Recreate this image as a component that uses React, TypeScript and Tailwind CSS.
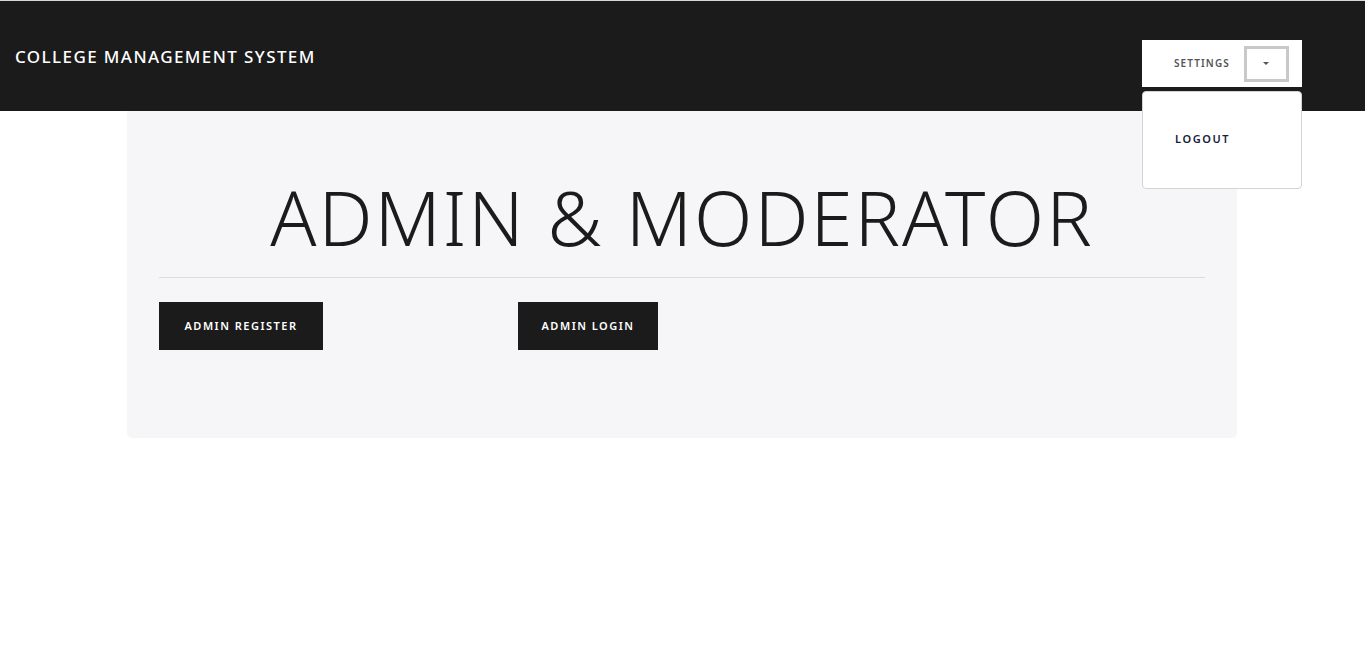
export default function App() {
  return (
    <div className="min-h-screen bg-white" style={{ fontFamily: '"Noto Sans", "Open Sans", sans-serif' }}>
      <header className="h-[111px] bg-[#1b1b1b] border-t border-[#d8d8d8] flex items-start justify-between px-[15px]">
        <div className="mt-[43px] text-white text-[17px] font-medium tracking-[1.4px]">COLLEGE MANAGEMENT SYSTEM</div>
        <div className="relative mt-[39px] mr-[48px]">
          <div className="w-[160px] h-[47px] bg-white flex items-center">
            <span className="ml-[32px] text-[10px] text-[#555] tracking-[1.1px] font-semibold">SETTINGS</span>
            <button className="ml-[14px] w-[45px] h-[36px] border-[3px] border-[#c9c9c9] flex items-center justify-center">
              <span className="w-0 h-0 border-l-[3px] border-r-[3px] border-t-[3px] border-l-transparent border-r-transparent border-t-[#555]" />
            </button>
          </div>
          <div className="absolute left-0 top-[51px] w-[160px] h-[98px] bg-white border border-[#d4d4d4] rounded-[4px] flex items-center z-10">
            <span className="ml-[32px] -mt-[2px] text-[11px] text-[#16203a] tracking-[1.6px] font-semibold">LOGOUT</span>
          </div>
        </div>
      </header>
      <main className="mx-[127px] w-[1110px] bg-[#f6f6f8] rounded-b-[5px] px-[32px] pb-[88px]">
        <h1 className="pt-[66px] pb-[20px] text-center text-[76px] leading-[80px] font-light text-[#1b1b1b] tracking-[2px]">
          ADMIN &amp; MODERATOR
        </h1>
        <div className="border-t border-[#dcdcdc]" />
        <div className="flex mt-[24px]">
          <div className="w-[359px]">
            <button className="h-[48px] w-[164px] bg-[#1b1b1b] text-white text-[11px] font-semibold tracking-[1.5px]">ADMIN REGISTER</button>
          </div>
          <button className="h-[48px] w-[140px] bg-[#1b1b1b] text-white text-[11px] font-semibold tracking-[1.5px]">ADMIN LOGIN</button>
        </div>
      </main>
    </div>
  );
}
